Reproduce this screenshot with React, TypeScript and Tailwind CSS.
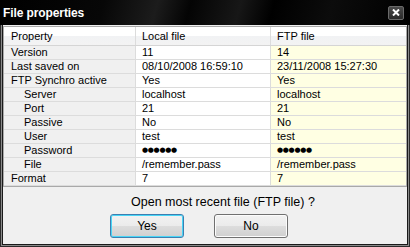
import React from "react";

type Row = {
  name: string;
  local: string;
  ftp: string;
  indent?: boolean;
  secret?: boolean;
};

const rows: Row[] = [
  { name: "Version", local: "11", ftp: "14" },
  { name: "Last saved on", local: "08/10/2008 16:59:10", ftp: "23/11/2008 15:27:30" },
  { name: "FTP Synchro active", local: "Yes", ftp: "Yes" },
  { name: "Server", local: "localhost", ftp: "localhost", indent: true },
  { name: "Port", local: "21", ftp: "21", indent: true },
  { name: "Passive", local: "No", ftp: "No", indent: true },
  { name: "User", local: "test", ftp: "test", indent: true },
  { name: "Password", local: "●●●●●●", ftp: "●●●●●●", indent: true, secret: true },
  { name: "File", local: "/remember.pass", ftp: "/remember.pass", indent: true },
  { name: "Format", local: "7", ftp: "7" },
];

function Value({ text, secret }: { text: string; secret?: boolean }) {
  if (secret) {
    return (
      <span className="font-['DejaVu_Sans',sans-serif] text-[7px] leading-none tracking-[-0.3px]">
        {text}
      </span>
    );
  }
  return <span>{text}</span>;
}

function CloseButton() {
  return (
    <div className="flex h-[14px] w-[16px] items-center justify-center rounded-[2px] border border-[#6a6a6a] bg-[linear-gradient(180deg,#4a4a4a,#2a2a2a)]">
      <svg width="8" height="7" viewBox="0 0 8 7">
        <path d="M1 0.5 L7 6.5 M7 0.5 L1 6.5" stroke="#fff" strokeWidth="2" />
      </svg>
    </div>
  );
}

export default function App() {
  return (
    <div className="flex h-[247px] w-[410px] flex-col bg-black font-['Liberation_Sans',Arial,sans-serif] text-[11px] text-black">
      {/* title bar */}
      <div className="flex h-[25px] shrink-0 items-center justify-between bg-[linear-gradient(105deg,#000_0%,#070707_25%,#1c1c1c_38%,#040404_46%,#171717_58%,#000_66%,#0c0c0c_80%,#000_100%)] pl-[3px] pr-[6px]">
        <span className="text-[12px] font-bold tracking-[-0.1px] text-white">File properties</span>
        <CloseButton />
      </div>

      {/* window frame */}
      <div className="flex flex-1 flex-col border-x border-b border-[#2c2c2c]">
        <div className="flex flex-1 flex-col border-x border-b border-[#8a8a8a]">
          <div className="flex flex-1 flex-col border-x border-b border-[#1a1a1a]">
            <div className="flex flex-1 flex-col bg-[#f0f0f0]">
              {/* property table */}
              <div className="mt-[1px] border border-[#a9a9a9] bg-white leading-[13px]">
                <div className="grid h-[19px] grid-cols-[131px_135px_1fr] grid-rows-[18px] border-b border-[#d5d5d5] bg-[linear-gradient(180deg,#fff_0%,#fff_50%,#f1f2f4_51%,#f3f3f3_100%)]">
                  <div className="flex items-center pl-[7px]">Property</div>
                  <div className="flex items-center border-l border-[#dcdcdc] pl-[6px]">Local file</div>
                  <div className="flex items-center border-l border-[#dcdcdc] pl-[6px]">FTP file</div>
                </div>
                {rows.map((r) => (
                  <div
                    key={r.name}
                    className="grid h-[14px] grid-cols-[131px_135px_1fr] grid-rows-[13px] border-b border-[#dcdcdc]"
                  >
                    <div
                      className={`flex items-center bg-[#f0f0f0] ${
                        r.indent ? "pl-[20px]" : "pl-[7px]"
                      }`}
                    >
                      {r.name}
                    </div>
                    <div className="flex items-center border-l border-[#dcdcdc] bg-white pl-[6px]">
                      <Value text={r.local} secret={r.secret} />
                    </div>
                    <div className="flex items-center border-l border-[#dcdcdc] bg-[#ffffe3] pl-[6px]">
                      <Value text={r.ftp} secret={r.secret} />
                    </div>
                  </div>
                ))}
              </div>

              {/* question */}
              <div className="mt-[8px] pl-[128px] text-[12.5px] leading-[14px]">
                Open most recent file (FTP file) ?
              </div>

              {/* buttons */}
              <div className="mt-[5px] flex gap-[30px] pl-[107px]">
                <button
                  type="button"
                  className="h-[24px] w-[74px] rounded-[3px] border border-[#3c7fb1] bg-[linear-gradient(180deg,#f2f2f2_0%,#ebebeb_50%,#dddddd_51%,#cfcfcf_100%)] text-[12px] shadow-[inset_0_0_0_1px_#48d5f6]"
                >
                  Yes
                </button>
                <button
                  type="button"
                  className="h-[24px] w-[74px] rounded-[3px] border border-[#707070] bg-[linear-gradient(180deg,#f2f2f2_0%,#ebebeb_50%,#dddddd_51%,#cfcfcf_100%)] text-[12px] shadow-[inset_0_0_0_1px_#fcfcfc]"
                >
                  No
                </button>
              </div>
            </div>
          </div>
        </div>
      </div>
    </div>
  );
}
